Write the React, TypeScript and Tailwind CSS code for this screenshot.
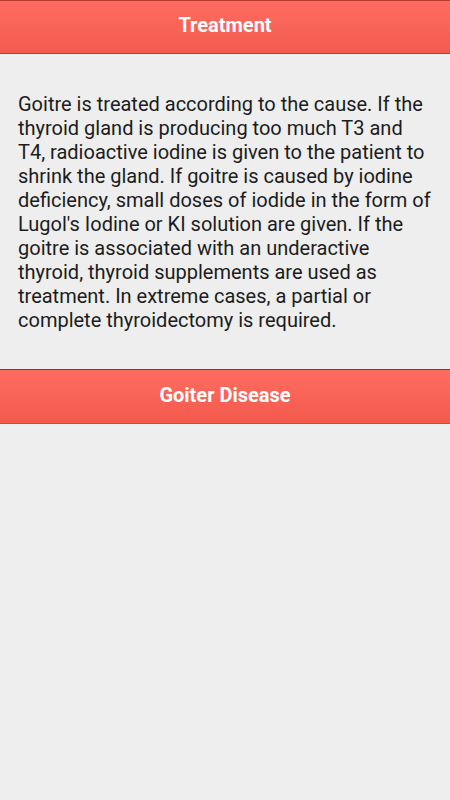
export default function App() {
  return (
    <div className="min-h-[800px] bg-[#eeeeee] font-['Roboto',sans-serif]">
      <header className="h-[54px] pb-1 flex items-center justify-center border-y border-[#b8392e] bg-gradient-to-b from-[#ff6d60] to-[#f25a4c]">
        <h1 className="text-white text-[20px] font-bold">Treatment</h1>
      </header>
      <p className="px-[18px] pt-[38px] pb-[37px] text-[20px] leading-[24px] text-[#1c1c1c]">
        Goitre is treated according to the cause. If the thyroid gland is
        producing too much T3 and T4, radioactive iodine is given to the patient
        to shrink the gland. If goitre is caused by iodine deficiency, small
        doses of iodide in the form of Lugol's Iodine or KI solution are given.
        If the goitre is associated with an underactive thyroid, thyroid
        supplements are used as treatment. In extreme cases, a partial or
        complete thyroidectomy is required.
      </p>
      <header className="h-[55px] pb-1 flex items-center justify-center border-t border-[#a8281e] border-b border-b-[#c9483c] bg-gradient-to-b from-[#ff6d60] to-[#f25a4c]">
        <h2 className="text-white text-[20px] font-bold">Goiter Disease</h2>
      </header>
    </div>
  );
}
